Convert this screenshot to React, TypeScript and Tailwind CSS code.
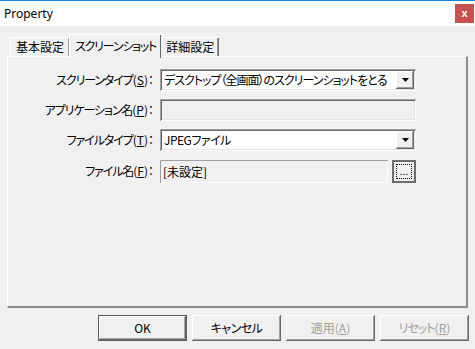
import React from 'react';

const raised = 'shadow-[inset_-1px_-1px_#696969,inset_1px_1px_#ffffff,inset_-2px_-2px_#a0a0a0]';
const sunken = 'shadow-[inset_1px_1px_#a0a0a0,inset_-1px_-1px_#ffffff,inset_2px_2px_#696969,inset_-2px_-2px_#e3e3e3]';

const Key: React.FC<{ k: string }> = ({ k }) => <span className="underline underline-offset-1">{k}</span>;

const Label: React.FC<{ text: string; k: string }> = ({ text, k }) => (
  <div className="w-[152px] shrink-0 pr-[6px] text-right whitespace-nowrap">
    <span className="tracking-[-1.1px]">{text}</span>(<Key k={k} />)：
  </div>
);

const Arrow: React.FC = () => (
  <div className={`w-[18px] h-[18px] mt-[2px] mr-[2px] shrink-0 bg-[#f0f0f0] flex items-center justify-center ${raised}`}>
    <svg width="7" height="4" viewBox="0 0 7 4"><path d="M0 0h7L3.5 4z" fill="#000" /></svg>
  </div>
);

export default function App() {
  const font = "font-['Noto_Sans_CJK_JP','Noto_Sans',sans-serif] [font-feature-settings:'palt']";

  return (
    <div className={`w-[475px] h-[349px] bg-[#f0f0f0] flex flex-col text-[12px] text-black ${font}`}>
      {/* title bar */}
      <div className="h-[26px] border-t border-[#1883d7] bg-white flex items-center justify-between">
        <span className="pl-[4px] font-['Noto_Sans',sans-serif] text-[12px] leading-none">Property</span>
        <div className="w-[19px] h-[19px] mr-[1px] bg-[#c75050] flex items-center justify-center text-white text-[11px] font-bold leading-none font-['Liberation_Sans',sans-serif]">
          x
        </div>
      </div>

      {/* tabs */}
      <div className="mt-[8px] pl-[10px] flex items-end h-[22px]">
        <div className="h-[19px] px-[5px] flex items-center border-t border-l border-white shadow-[inset_-1px_0_#a0a0a0]">基本設定</div>
        <div className="relative z-10 -mb-[2px] h-[24px] px-[5px] flex items-start pt-[2px] bg-[#f0f0f0] border-t border-l border-white shadow-[inset_-1px_0_#696969] tracking-[-1.2px]">
          スクリーンショット
        </div>
        <div className="h-[19px] px-[5px] flex items-center border-t border-white shadow-[inset_-1px_0_#696969,inset_-2px_0_#a0a0a0]">詳細設定</div>
      </div>

      {/* panel */}
      <div className="ml-[7px] w-[461px] h-[252px] border-t border-l border-white border-r-2 border-b-2 border-r-[#8c8c8c] border-b-[#8c8c8c] pt-[12px] flex flex-col gap-[8px]">
        <div className="flex items-center h-[22px]">
          <Label text="スクリーンタイプ" k="S" />
          <div className={`w-[256px] h-[22px] bg-white flex justify-between ${sunken}`}>
            <span className="pl-[4px] leading-[22px] whitespace-nowrap tracking-[-1px]">デスクトップ（全画面）のスクリーンショットをとる</span>
            <Arrow />
          </div>
        </div>
        <div className="flex items-center h-[22px]">
          <Label text="アプリケーション名" k="P" />
          <div className={`w-[256px] h-[22px] bg-[#f0f0f0] ${sunken}`} />
        </div>
        <div className="flex items-center h-[22px]">
          <Label text="ファイルタイプ" k="T" />
          <div className={`w-[256px] h-[22px] bg-white flex justify-between ${sunken}`}>
            <span className="pl-[4px] leading-[22px] tracking-[-0.5px]">JPEGファイル</span>
            <Arrow />
          </div>
        </div>
        <div className="flex items-center h-[24px]">
          <Label text="ファイル名" k="F" />
          <div className="w-[228px] h-[23px] bg-[#f0f0f0] pl-[3px] leading-[23px] shadow-[inset_1px_1px_#a0a0a0,inset_-1px_-1px_#ffffff]">
            [未設定]
          </div>
          <div className="ml-[4px] w-[24px] h-[23px] border-2 border-[#6d6d6d] bg-[#f0f0f0] p-[2px]">
            <div className="w-full h-full border border-dotted border-black flex items-end justify-center leading-none font-['Liberation_Sans',sans-serif] text-[11px] pb-[1px]">
              ...
            </div>
          </div>
        </div>
      </div>

      {/* buttons */}
      <div className="mt-[7px] pr-[6px] flex justify-end gap-[5px]">
        <button className={`w-[89px] h-[26px] bg-[#f0f0f0] border border-[#5a5a5a] ${raised}`}>OK</button>
        <button className={`w-[89px] h-[26px] bg-[#f0f0f0] tracking-[-0.5px] ${raised}`}>キャンセル</button>
        <button className={`w-[89px] h-[26px] bg-[#f0f0f0] text-[#a0a0a0] ${raised}`}>
          適用(<Key k="A" />)
        </button>
        <button className={`w-[89px] h-[26px] bg-[#f0f0f0] text-[#a0a0a0] ${raised}`}>
          <span className="tracking-[-1px]">リセット</span>(<Key k="R" />)
        </button>
      </div>
    </div>
  );
}
